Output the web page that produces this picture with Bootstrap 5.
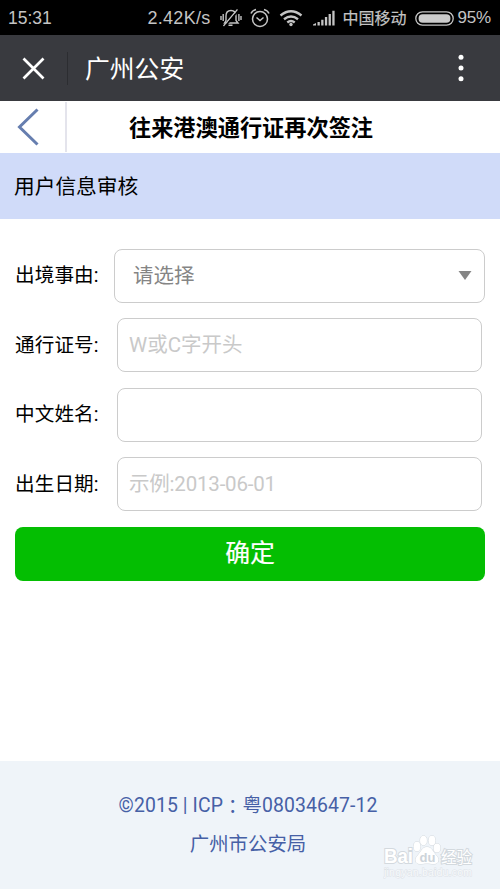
<!DOCTYPE html>
<html lang="zh-CN">
<head>
<meta charset="utf-8">
<meta name="viewport" content="width=device-width, initial-scale=1">
<title>广州公安</title>
<link href="https://cdn.jsdelivr.net/npm/bootstrap@5.3.0/dist/css/bootstrap.min.css" rel="stylesheet">
<style>
body{font-family:Roboto,"Noto Sans CJK SC",sans-serif;color:#000;background:#fff;line-height:1.2;overflow:hidden}
.screen{height:889px}
.status-strip{height:35px;background:#000;color:#c4c4c4;font:17.5px "Liberation Sans","Noto Sans CJK SC",sans-serif;padding:1px 9px 0 8px}
.status-strip svg,.app-top svg{display:block;flex:none}
.speed{font-size:18px;margin-right:9px;letter-spacing:.3px}
.carrier{font-size:16px;margin:0 8px 2px 8px;-webkit-text-stroke:.2px #c4c4c4}
.level{margin-left:4px;font-size:17px;white-space:nowrap;letter-spacing:-.2px}
.gap-wifi{margin-left:9px}
.gap-bars{margin-left:10px}
.app-top{height:66px;background:#393a3f;color:#fff;font-size:24.8px;padding:0 33px 0 22px}
.app-name{padding-top:4px}
.top-rule{width:1px;height:33px;background:#2c2d31;margin:0 17px 0 22px}
.page-top{height:52px}
.back-link{width:67px;height:50px;border-right:2px solid #e4e4ec;padding-left:17px}
.page-name{font-size:22.2px;font-weight:600;padding:2px 0 0 62px;white-space:nowrap}
.section-name{height:66px;background:#d0dbf9;font-size:20.7px;padding:3px 0 0 14px}
.form-area{padding:29.5px 15px 0}
.field{height:54px;margin-bottom:15.5px}
.field label{font-size:19.6px;width:99px;padding-top:1px;white-space:nowrap;letter-spacing:.1px}
.field .form-control,.field .pick{height:54px;border:1.5px solid #ccc;border-radius:8px;font-size:20.5px;background:#fff}
.field .form-control{margin:0 3px;padding:0 11px;color:#000}
.field .form-control::placeholder{color:#c9c9c9;opacity:1}
#birth{letter-spacing:-.2px}
.pick{color:#858585;padding:0 12px 0 18px}
.pick span{padding-top:1px}
.submit{height:54px;background:#04be02;color:#fff;border:0;border-radius:8px;font-size:24.8px;-webkit-text-stroke:.2px #fff;padding:1px 0 0}
.submit:hover{background:#04be02;color:#fff}
.page-foot{height:128px;background:#eff4f9;color:#4660a6;font-size:19.4px;line-height:39px;padding:25px 4px 0 0;white-space:nowrap}
.icp{letter-spacing:.1px}
.mid-colon{font-family:"Noto Sans CJK TC",sans-serif;line-height:1;vertical-align:-2px}
.watermark{right:17px;bottom:8px;width:100px;height:52px}
</style>
<script src="https://cdn.jsdelivr.net/npm/bootstrap@5.3.0/dist/js/bootstrap.bundle.min.js"></script>
</head>
<body>
<div class="screen d-flex flex-column position-relative">
  <div class="status-strip d-flex align-items-center">
    <span class="me-auto">15:31</span>
    <span class="speed">2.42K/s</span>
    <svg width="22" height="20" viewBox="0 0 22 20" fill="none" stroke="#c4c4c4" stroke-width="1.4"><path d="M4.500 15h13.500l-2-2.500V8c0-3.500-2-5.500-5-5.500S6 4.500 6 8v4.500z"/><path d="M8.500 17.300h4M1 8v4M3.200 6v7M21 8v4M18.900 6v7M17.500 1.500L3.500 18"/><path d="M18.800 2.200L4.800 18.700" stroke="#000"/></svg>
    <svg class="ms-2" width="20" height="20" viewBox="0 0 20 20" fill="none" stroke="#c4c4c4" stroke-width="1.5"><circle cx="10" cy="11" r="7.500"/><path d="M6.500 9.500l3.500 3 3.500-3M1 5.500Q2.200 2.500 6 1.500M19 5.500Q17.800 2.500 14 1.500"/></svg>
    <svg class="gap-wifi" width="24" height="18" viewBox="0 0 24 18" fill="none" stroke="#c4c4c4" stroke-width="2.400"><path d="M1.500 6.500Q12-1.800 22.500 6.500M5 10.200q7-5.500 14 0M8.300 13.500q3.700-2.800 7.400 0"/><circle cx="12" cy="15.500" r="1.700" fill="#c4c4c4" stroke="none"/></svg>
    <svg class="gap-bars" width="22" height="16" viewBox="0 0 22 16" fill="#c4c4c4"><path d="M0 15.500v-1l3-1.500v2.500zM4.500 12h2.300v3.500H4.500zM8.200 9.800h2.300v5.700H8.200zM11.900 7h2.300v8.500h-2.300zM15.600 4h2.300v11.500h-2.300zM19.300.8h2.300v14.700h-2.300z"/></svg>
    <span class="carrier">中国移动</span>
    <svg width="39" height="15" viewBox="0 0 39 15"><rect x=".8" y=".8" width="37.400" height="13.400" rx="6.700" fill="none" stroke="#c4c4c4" stroke-width="1.300"/><rect x="3.600" y="3.200" width="31.800" height="8.600" rx="4" fill="#ccc"/></svg>
    <span class="level">95%</span>
  </div>
  <header class="app-top d-flex align-items-center">
    <svg width="23" height="23" viewBox="0 0 23 23" fill="none" stroke="#fff" stroke-width="2.700"><path d="M1.500 1.500l20 20M21.500 1.500l-20 20"/></svg>
    <span class="top-rule"></span>
    <span class="app-name me-auto">广州公安</span>
    <svg width="12" height="28" viewBox="0 0 12 28" fill="#fff"><circle cx="6" cy="3.300" r="2.500"/><circle cx="6" cy="14" r="2.500"/><circle cx="6" cy="24.700" r="2.500"/></svg>
  </header>
  <div class="page-top d-flex align-items-center">
    <a href="#" class="back-link d-flex align-items-center" aria-label="返回"><svg width="22" height="38" viewBox="0 0 22 38" fill="none" stroke="#667eaf" stroke-width="3"><path d="M20.500 1.500L2.500 19l18 17.500"/></svg></a>
    <div class="page-name">往来港澳通行证再次签注</div>
  </div>
  <div class="section-name d-flex align-items-center">用户信息审核</div>
  <form class="form-area flex-grow-1">
    <div class="field d-flex align-items-center">
      <label>出境事由:</label>
      <div class="pick flex-grow-1 d-flex align-items-center justify-content-between"><span>请选择</span><svg width="14" height="9" viewBox="0 0 14 9"><path d="M.5 0h13L7 9z" fill="#858585"/></svg></div>
    </div>
    <div class="field d-flex align-items-center">
      <label for="permit">通行证号:</label>
      <input id="permit" class="form-control flex-fill w-auto" placeholder="W或C字开头">
    </div>
    <div class="field d-flex align-items-center">
      <label for="person">中文姓名:</label>
      <input id="person" class="form-control flex-fill w-auto">
    </div>
    <div class="field d-flex align-items-center">
      <label for="birth">出生日期:</label>
      <input id="birth" class="form-control flex-fill w-auto" placeholder="示例:2013-06-01">
    </div>
    <button type="button" class="submit btn w-100">确定</button>
  </form>
  <footer class="page-foot text-center">
    <div class="icp">©2015 | ICP<span class="mid-colon" lang="zh-TW">：</span>粤08034647-12</div>
    <div>广州市公安局</div>
  </footer>
  <svg class="watermark position-absolute" viewBox="0 0 100 52" fill="#fff" stroke="#d3d9de" stroke-width="1" paint-order="stroke">
    <g font-family="Liberation Sans, Noto Sans CJK SC, sans-serif" font-weight="700">
      <text x="1" y="34" font-size="20" textLength="29" lengthAdjust="spacingAndGlyphs" stroke-width="2">Bai</text>
      <ellipse cx="34" cy="17.500" rx="3.400" ry="4.700"/><ellipse cx="40.500" cy="11.500" rx="3.400" ry="4.700"/><ellipse cx="49" cy="11.500" rx="3.400" ry="4.700"/><ellipse cx="54" cy="19" rx="3.400" ry="4.500"/>
      <path d="M44 18c5 0 6 5 9 8 4 4 3 9-2 9-3 0-4-.5-7-.5s-4 .5-7 .5c-5 0-6-5-2-9 3-3 4-8 9-8z"/>
      <text x="36.500" y="33" font-size="13" fill="#cdd4da" stroke="none">du</text>
      <text x="58" y="34" font-size="15.500" font-weight="400" stroke-width="2">经验</text>
      <text x="1" y="47" font-size="10.500" font-weight="400" textLength="88" fill="#f8fafc" stroke="#dde2e7">jingyan.baidu.com</text>
    </g>
  </svg>
</div>
</body>
</html>
